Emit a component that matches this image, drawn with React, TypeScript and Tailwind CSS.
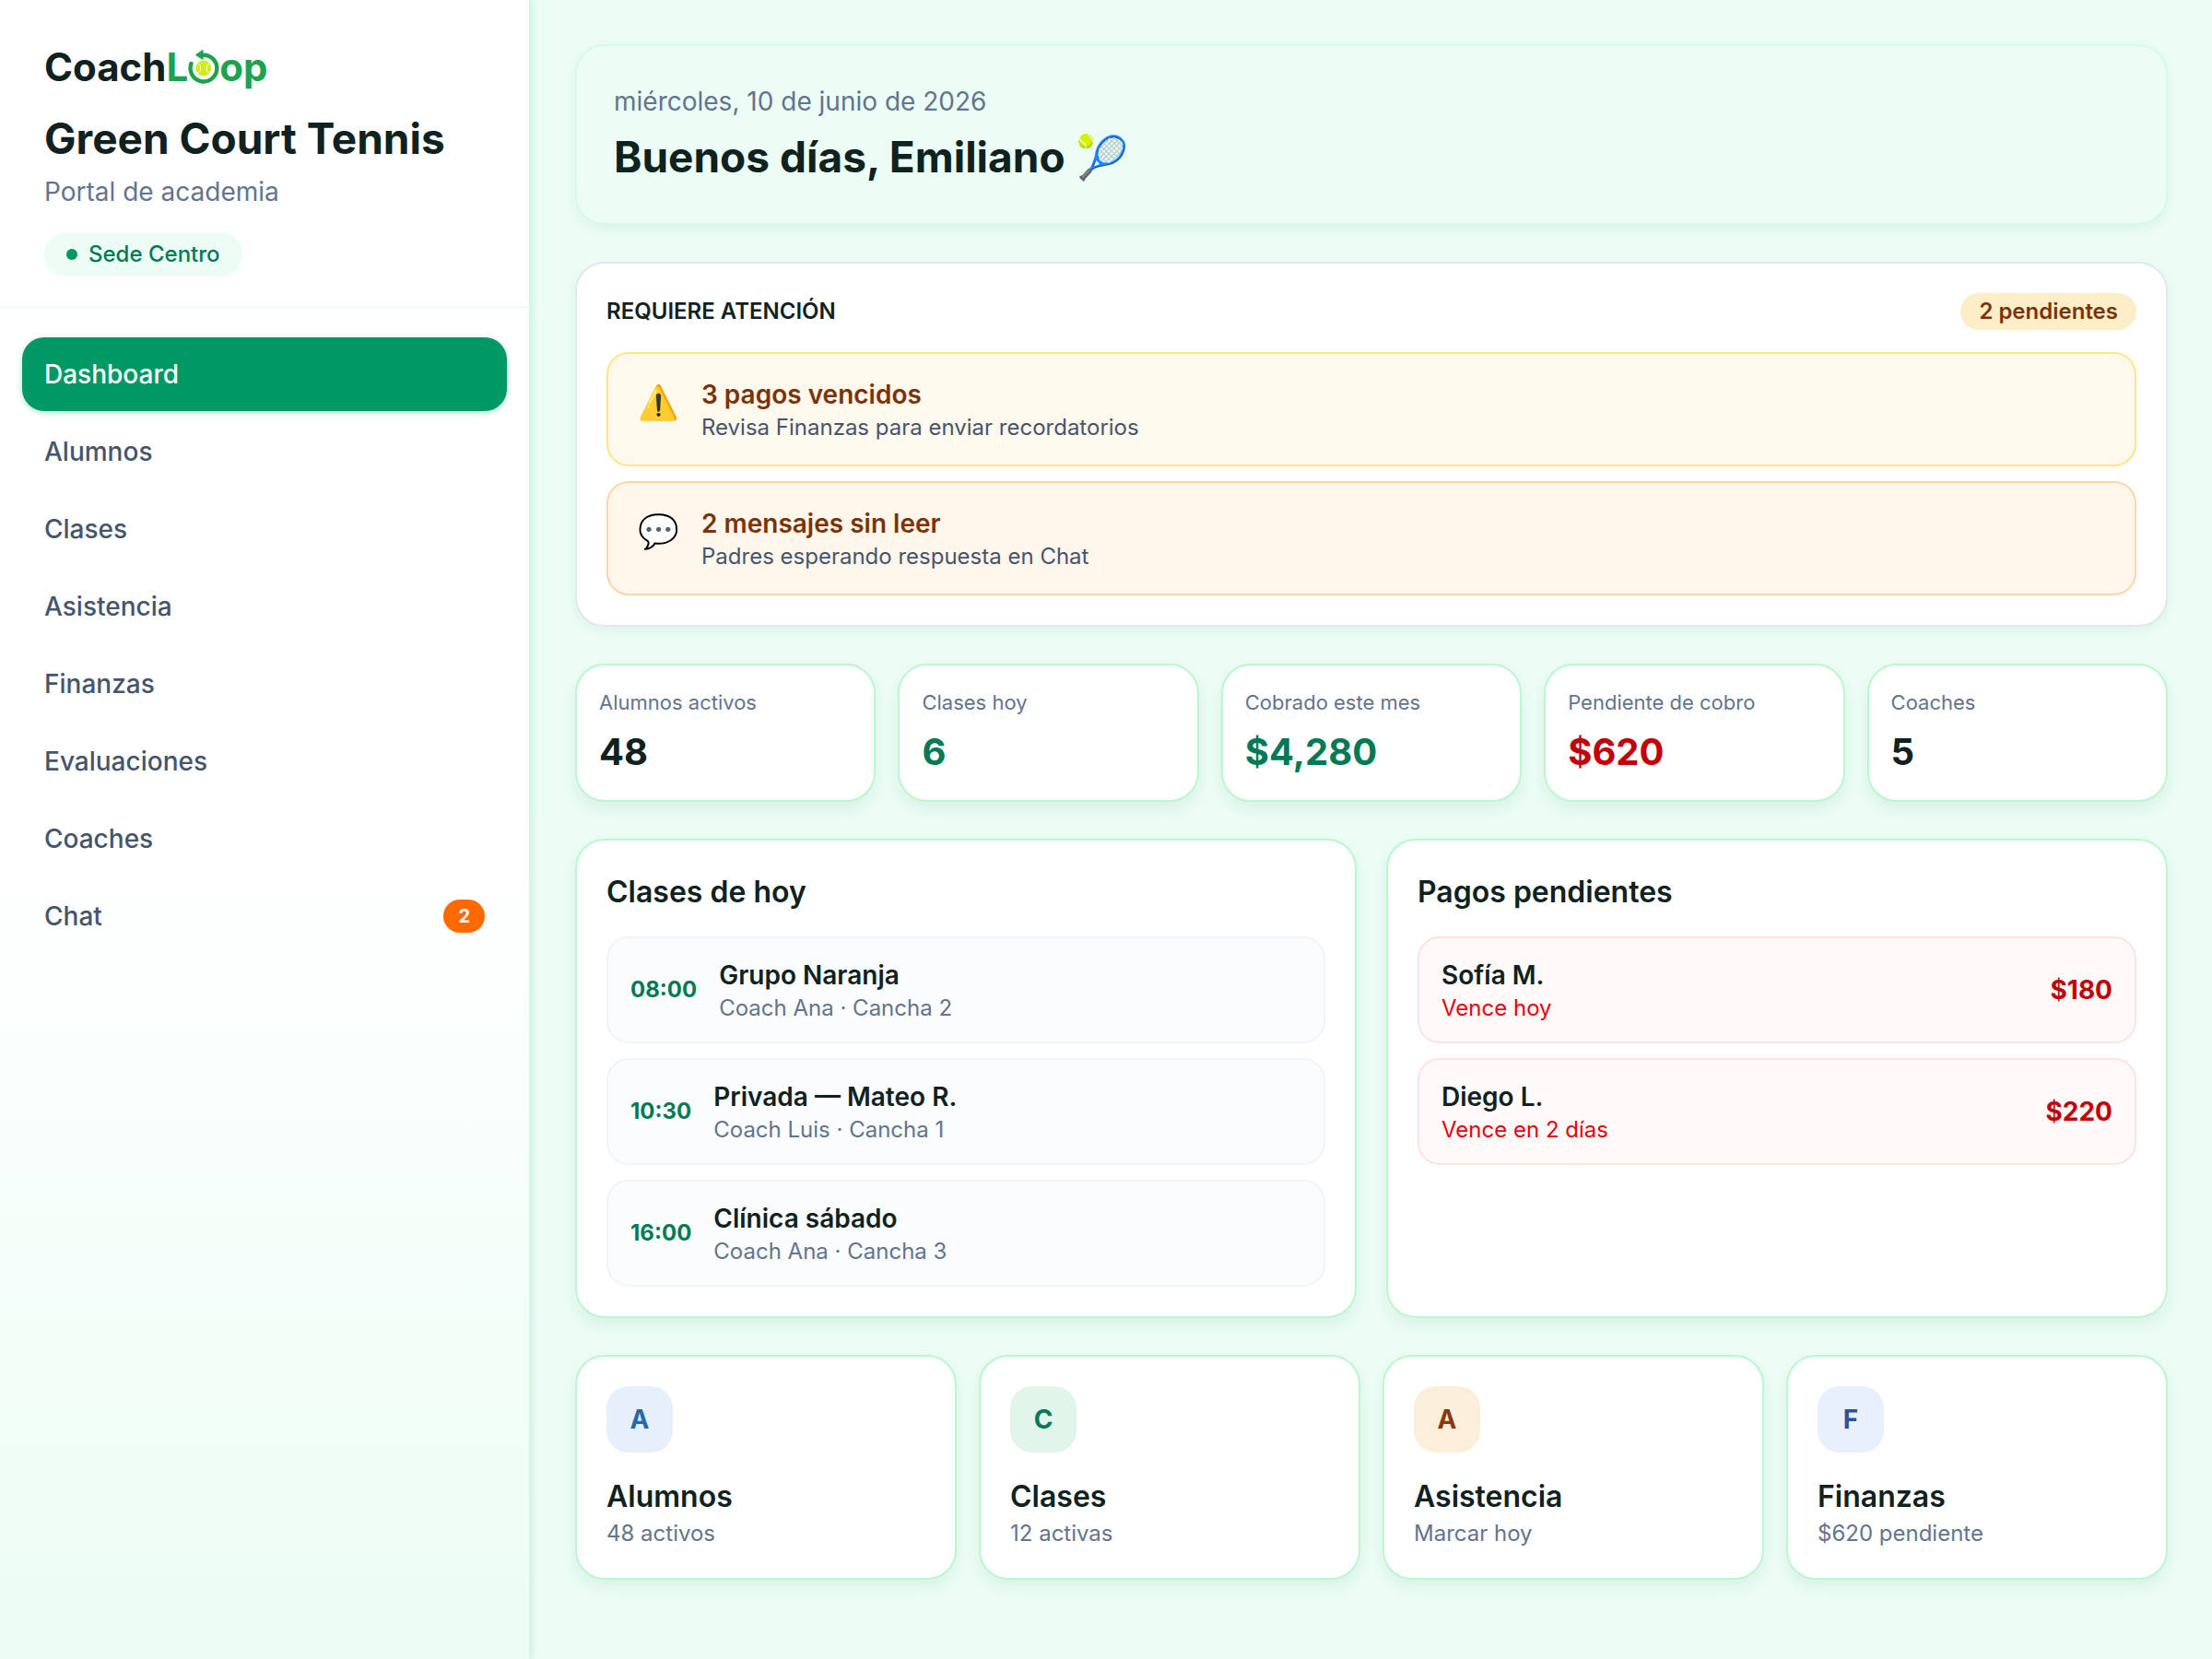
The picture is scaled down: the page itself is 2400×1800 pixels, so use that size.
import { clsx } from 'clsx';

const NAV = [
  { label: 'Dashboard', active: true },
  { label: 'Alumnos' },
  { label: 'Clases' },
  { label: 'Asistencia' },
  { label: 'Finanzas' },
  { label: 'Evaluaciones' },
  { label: 'Coaches' },
  { label: 'Chat', badge: 2 },
];

const ALERTS = [
  {
    icon: '⚠️',
    title: '3 pagos vencidos',
    text: 'Revisa Finanzas para enviar recordatorios',
    tone: 'border-[#fee685] bg-[#fff8ec]',
  },
  {
    icon: '💬',
    title: '2 mensajes sin leer',
    text: 'Padres esperando respuesta en Chat',
    tone: 'border-[#ffd6a7] bg-[#fff6ec]',
  },
];

const STATS = [
  { label: 'Alumnos activos', value: '48', color: 'text-[#0f2220]' },
  { label: 'Clases hoy', value: '6', color: 'text-[#007a55]' },
  { label: 'Cobrado este mes', value: '$4,280', color: 'text-[#007a55]' },
  { label: 'Pendiente de cobro', value: '$620', color: 'text-[#c10007]' },
  { label: 'Coaches', value: '5', color: 'text-[#0f2220]' },
];

const CLASSES = [
  { time: '08:00', name: 'Grupo Naranja', detail: 'Coach Ana · Cancha 2' },
  { time: '10:30', name: 'Privada — Mateo R.', detail: 'Coach Luis · Cancha 1' },
  { time: '16:00', name: 'Clínica sábado', detail: 'Coach Ana · Cancha 3' },
];

const PAYMENTS = [
  { name: 'Sofía M.', due: 'Vence hoy', amount: '$180' },
  { name: 'Diego L.', due: 'Vence en 2 días', amount: '$220' },
];

const LINKS = [
  { title: 'Alumnos', text: '48 activos', tone: 'bg-[#e7effb] text-[#2767ac]' },
  { title: 'Clases', text: '12 activas', tone: 'bg-[#e1f5eb] text-[#007a55]' },
  { title: 'Asistencia', text: 'Marcar hoy', tone: 'bg-[#fcefda] text-[#853a10]' },
  { title: 'Finanzas', text: '$620 pendiente', tone: 'bg-[#e8effd] text-[#2f5292]' },
];

const card = 'rounded-[32px] border-2 border-[#b9f8cf] bg-white shadow-[0_8px_16px_rgba(6,78,59,0.07)]';

function Logo() {
  return (
    <div className="flex h-[50px] items-center text-[42px] leading-[50px] font-bold">
      <span>Coach</span>
      <span className="text-[#1fa14d]">L</span>
      <svg viewBox="1 0 34 46" className="h-[46px] w-[34px]" aria-hidden="true">
        <path
          d="M4.5 19A14.400 14.400 0 1 0 18 9.700H15"
          fill="none"
          stroke="#1fa14d"
          strokeWidth="4.400"
          strokeLinejoin="round"
        />
        <circle cx="4.500" cy="19" r="2.200" fill="#1fa14d" />
        <path d="M9.500 9.500 17 4.500v10z" fill="#1fa14d" stroke="#1fa14d" strokeLinejoin="round" />
        <circle cx="17.800" cy="24" r="8.400" fill="#d0ee10" />
        <path
          d="M11.800 18.500q1 2 2.600 3v5q-1.600 1-2.600 3M23.800 18.500q-1 2-2.600 3v5q1.600 1 2.600 3"
          fill="none"
          stroke="#fff"
          strokeWidth="1"
        />
      </svg>
      <span className="text-[#1fa14d]">op</span>
    </div>
  );
}

function Sidebar() {
  return (
    <aside className="flex w-[576px] shrink-0 flex-col border-r-2 border-[#d0fae5] bg-linear-to-b from-white via-white to-[#ecfdf5] shadow-[2px_0_6px_rgba(6,78,59,0.08)]">
      <header className="border-b-2 border-[#ecfdf5] px-12 pt-12 pb-8">
        <Logo />
        <h2 className="mt-5 text-[46px] leading-[64px] font-bold">Green Court Tennis</h2>
        <p className="mt-1.5 text-[28px] leading-10 text-[#62748e]">Portal de academia</p>
        <span className="mt-6 inline-flex items-center gap-3 rounded-full bg-[#ecfdf5] px-6 py-2 text-2xl font-medium text-[#007a55]">
          <span className="size-3 rounded-full bg-[#009966]" />
          Sede Centro
        </span>
      </header>
      <nav className="flex flex-col gap-1 px-6 py-8">
        {NAV.map((item) => (
          <a
            key={item.label}
            href="#"
            className={clsx(
              'flex items-center justify-between rounded-3xl px-6 py-5 text-[28px] leading-10 font-medium',
              item.active
                ? 'bg-[#009966] text-white shadow-[0_2px_6px_rgba(0,153,102,0.3)]'
                : 'text-[#45556c]',
            )}
          >
            {item.label}
            {item.badge && (
              <span className="rounded-full bg-[#ff6900] px-4 text-[20px] leading-9 font-bold text-white">
                {item.badge}
              </span>
            )}
          </a>
        ))}
      </nav>
    </aside>
  );
}

export default function App() {
  return (
    <div className="flex min-h-screen bg-[#ebfdf4] font-['Inter',sans-serif] text-[#0f2220]">
      <Sidebar />
      <main className="flex min-w-0 flex-1 flex-col gap-10 p-12">
        <header className="rounded-[32px] border-2 border-[#d6fae8] bg-[#ebfdf4] p-10 shadow-[0_4px_12px_rgba(6,78,59,0.06)]">
          <p className="text-[28px] leading-10 text-[#62748e]">miércoles, 10 de junio de 2026</p>
          <h1 className="mt-2 text-[46px] leading-[64px] font-bold">Buenos días, Emiliano 🎾</h1>
        </header>

        <section className="rounded-[32px] border-2 border-[#e2e8f0] bg-white p-8 shadow-[0_4px_12px_rgba(6,78,59,0.06)]">
          <div className="mb-6 flex items-center justify-between">
            <h2 className="text-2xl leading-10 font-semibold">REQUIERE ATENCIÓN</h2>
            <span className="rounded-full bg-[#fdeec8] px-5 text-2xl leading-10 font-semibold text-[#7b3306]">
              2 pendientes
            </span>
          </div>
          <div className="flex flex-col gap-4">
            {ALERTS.map((alert) => (
              <a
                key={alert.title}
                href="#"
                className={clsx('flex gap-6 rounded-3xl border-2 px-8 py-6', alert.tone)}
              >
                <span className="text-4xl leading-[56px]">{alert.icon}</span>
                <div>
                  <p className="text-[28px] leading-10 font-semibold text-[#7b3306]">
                    {alert.title}
                  </p>
                  <p className="text-2xl text-[#45556c]">{alert.text}</p>
                </div>
              </a>
            ))}
          </div>
        </section>

        <section className="grid grid-cols-5 gap-6">
          {STATS.map((stat) => (
            <div key={stat.label} className={clsx(card, 'p-6')}>
              <p className="text-[22px] leading-8 text-[#62748e]">{stat.label}</p>
              <p className={clsx('mt-2.5 text-[40px] leading-[56px] font-bold', stat.color)}>
                {stat.value}
              </p>
            </div>
          ))}
        </section>

        <section className="grid grid-cols-2 gap-8">
          <div className={clsx(card, 'p-8')}>
            <h2 className="mb-6 text-[32px] leading-[48px] font-semibold">Clases de hoy</h2>
            <ul className="flex flex-col gap-4">
              {CLASSES.map((item) => (
                <li
                  key={item.time}
                  className="flex items-center gap-6 rounded-3xl border-2 border-[#f1f5f9] bg-[#fafcfe] px-6 py-5"
                >
                  <span className="text-2xl font-bold text-[#007a55]">{item.time}</span>
                  <div>
                    <p className="text-[28px] leading-10 font-semibold">{item.name}</p>
                    <p className="text-2xl text-[#62748e]">{item.detail}</p>
                  </div>
                </li>
              ))}
            </ul>
          </div>
          <div className={clsx(card, 'p-8')}>
            <h2 className="mb-6 text-[32px] leading-[48px] font-semibold">Pagos pendientes</h2>
            <ul className="flex flex-col gap-4">
              {PAYMENTS.map((item) => (
                <li
                  key={item.name}
                  className="flex items-center justify-between rounded-3xl border-2 border-[#ffe2e2] bg-[#fffafa] px-6 py-5"
                >
                  <div>
                    <p className="text-[28px] leading-10 font-semibold">{item.name}</p>
                    <p className="text-2xl text-[#e7000b]">{item.due}</p>
                  </div>
                  <span className="text-[28px] font-bold text-[#c10007]">{item.amount}</span>
                </li>
              ))}
            </ul>
          </div>
        </section>

        <section className="grid grid-cols-4 gap-6">
          {LINKS.map((link) => (
            <a key={link.title} href="#" className={clsx(card, 'p-8')}>
              <span
                className={clsx(
                  'flex size-[72px] items-center justify-center rounded-3xl text-[28px] font-bold',
                  link.tone,
                )}
              >
                {link.title[0]}
              </span>
              <p className="mt-6 text-[32px] leading-[48px] font-semibold">{link.title}</p>
              <p className="text-2xl text-[#62748e]">{link.text}</p>
            </a>
          ))}
        </section>
      </main>
    </div>
  );
}
